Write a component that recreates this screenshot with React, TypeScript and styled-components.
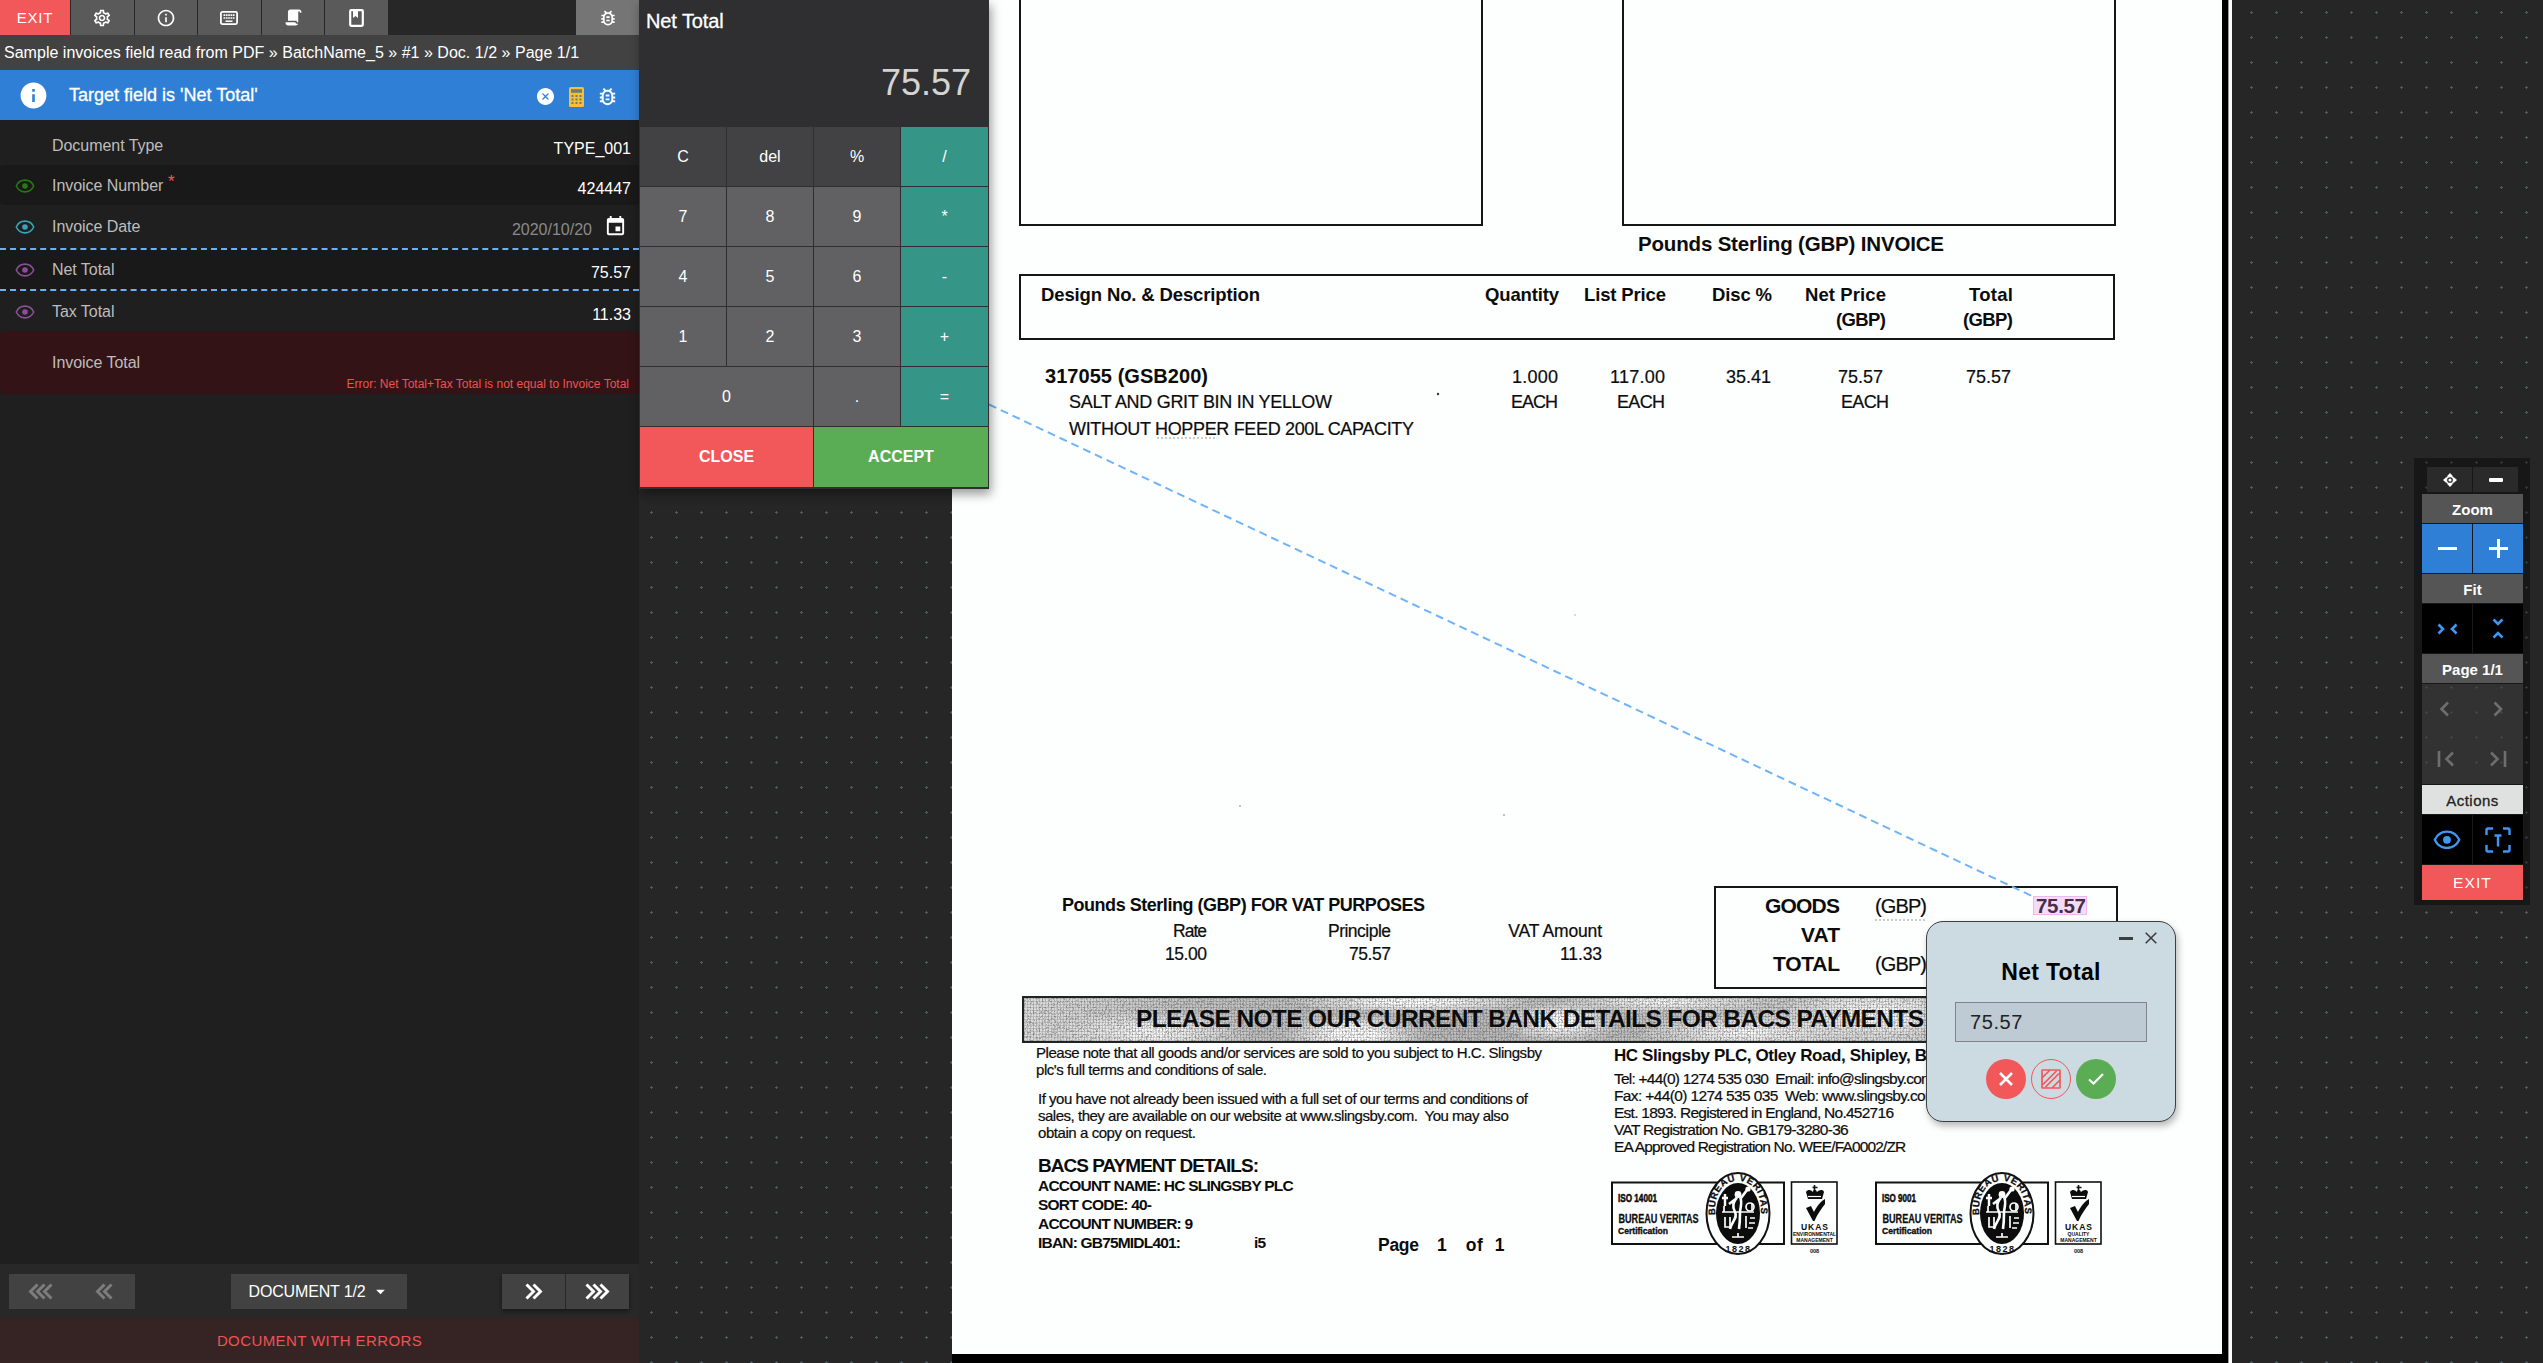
import React from "react";
import styled, { createGlobalStyle, css } from "styled-components";
import {
  MdOutlineSettings,
  MdInfoOutline,
  MdOutlineBugReport,
  MdInfo,
  MdEvent,
  MdArrowDropDown,
} from "react-icons/md";
import { IoIosCloseCircle } from "react-icons/io";

const SANS = '"Liberation Sans", Arial, Helvetica, sans-serif';

const GlobalStyle = createGlobalStyle`
  * { box-sizing: border-box; }
  body { margin: 0; background: #262626; font-family: ${SANS}; overflow: hidden; }
  svg { display: block; flex: none; }
`;

/* ---------- shell ---------- */

const Shell = styled.div`
  display: flex;
  width: 2543px;
  height: 1363px;
  overflow: hidden;
`;

const Sidebar = styled.aside`
  display: flex;
  flex-direction: column;
  width: 639px;
  flex: none;
  background: #1f1f1f;
  color: #fff;
`;

const Canvas = styled.main`
  position: relative;
  flex: 1;
  background: #262626;
`;

/* ---------- sidebar top ---------- */

const TopBar = styled.div`
  display: flex;
  gap: 1px;
  height: 35px;
  background: #272727;
`;

const TopButton = styled.button<{ $bg?: string; $w?: number; $end?: boolean }>`
  display: flex;
  align-items: center;
  justify-content: center;
  width: ${(p) => p.$w ?? 62.6}px;
  height: 35px;
  padding: 0;
  border: 0;
  margin-left: ${(p) => (p.$end ? "auto" : 0)};
  background: ${(p) => p.$bg ?? "#5a5a5a"};
  color: #fff;
  font: 15px ${SANS};
  letter-spacing: 0.8px;
`;

const Breadcrumb = styled.div`
  height: 35px;
  padding-left: 4px;
  background: #424242;
  font-size: 16px;
  line-height: 36px;
  letter-spacing: 0.02px;
  white-space: nowrap;
`;

const TargetBar = styled.div`
  display: flex;
  align-items: center;
  height: 50px;
  padding: 0 20px 0 18px;
  background: #307fd6;
`;

const TargetText = styled.span`
  flex: 1;
  margin-left: 20px;
  font-size: 18px;
  letter-spacing: 0;
  -webkit-text-stroke: 0.3px #fff;
`;

const TargetActions = styled.div`
  display: flex;
  align-items: center;
  gap: 12.5px;
  padding-top: 3px;
`;

/* ---------- fields ---------- */

const Field = styled.div<{ $h: number; $bg?: string; $active?: boolean; $pad?: number }>`
  display: flex;
  position: relative;
  height: ${(p) => p.$h}px;
  padding: ${(p) => p.$pad ?? 0}px 8px 0 15px;
  background: ${(p) => p.$bg ?? "transparent"};
  border-radius: 4px;
  ${(p) =>
    p.$active &&
    css`
      border-radius: 0;
      background: #191919;
      border-top: 2px dashed #6ab0ff;
      border-bottom: 2px dashed #6ab0ff;
    `}
`;

const EyeSlot = styled.div`
  width: 37px;
  padding-top: 3px;
`;

const Label = styled.div`
  flex: 1;
  font-size: 16px;
  line-height: 19px;
  letter-spacing: -0.05px;
  color: #bdbdbd;
`;

const Required = styled.sup`
  color: #f25a5c;
  font-size: 17px;
  line-height: 0;
  vertical-align: 4px;
`;

const Value = styled.div<{ $dim?: boolean }>`
  padding-top: 3px;
  font-size: 16px;
  line-height: 20px;
  color: ${(p) => (p.$dim ? "#8a8a8a" : "#fff")};
`;

const CalendarSlot = styled.div`
  margin: -2px 4px 0 12px;
`;

const FieldError = styled.div`
  align-self: flex-end;
  padding: 0 2px 3px 0;
  font-size: 12px;
  line-height: 14px;
  color: #ee5253;
`;

const Spacer = styled.div`
  flex: 1;
`;

/* ---------- sidebar bottom ---------- */

const NavBar = styled.div`
  display: flex;
  justify-content: space-between;
  align-items: center;
  height: 55px;
  padding: 0 10px 0 9px;
  background: #282828;
`;

const NavGroup = styled.div<{ $raised?: boolean }>`
  display: flex;
  gap: ${(p) => (p.$raised ? 1 : 0)}px;
  box-shadow: ${(p) => (p.$raised ? "0 2px 4px rgba(0,0,0,.45)" : "none")};
`;

const NavButton = styled.button<{ $dim?: boolean }>`
  display: flex;
  align-items: center;
  justify-content: center;
  width: 63px;
  height: 35px;
  padding: 0;
  border: 0;
  background: #424242;
  color: ${(p) => (p.$dim ? "#7d7d7d" : "#fff")};
`;

const DocumentPicker = styled.button`
  display: flex;
  align-items: center;
  width: 176px;
  height: 35px;
  padding: 0 0 0 18px;
  border: 0;
  background: #424242;
  color: #fff;
  font: 16px ${SANS};
  letter-spacing: -0.15px;
  gap: 4px;
`;

const ErrorFooter = styled.div`
  height: 44px;
  background: #362424;
  color: #ee5355;
  font-size: 15px;
  line-height: 44px;
  text-align: center;
  letter-spacing: 0.4px;
`;

/* ---------- calculator ---------- */

const Calculator = styled.section`
  position: absolute;
  left: 0;
  top: 0;
  width: 350px;
  height: 489px;
  padding: 0 1px 2px;
  background: #2f2f31;
  color: #fff;
  box-shadow: 2px 5px 10px rgba(0, 0, 0, 0.4);
`;

const CalcHead = styled.header`
  height: 127px;
  padding: 11px 17px 0 6px;
`;

const CalcTitle = styled.div`
  font-size: 20px;
  line-height: 20px;
  letter-spacing: -0.1px;
  -webkit-text-stroke: 0.3px #fff;
`;

const CalcDisplay = styled.div`
  margin-top: 32px;
  font-size: 36px;
  line-height: 40px;
  text-align: right;
  color: #d4d4d4;
`;

const CalcGrid = styled.div`
  display: grid;
  grid-template-columns: 86px 86px 86px 87px;
  grid-template-rows: repeat(5, 59px) 60px;
  gap: 1px;
`;

const keyColors = {
  fn: "#424244",
  num: "#616163",
  op: "#359688",
  close: "#f2575a",
  accept: "#5bad55",
};

const Key = styled.button<{ $kind: keyof typeof keyColors; $wide?: boolean }>`
  grid-column: span ${(p) => (p.$wide ? 2 : 1)};
  padding: 0;
  border: 0;
  background: ${(p) => keyColors[p.$kind]};
  color: #fff;
  font: ${(p) => (p.$kind === "close" || p.$kind === "accept" ? "bold " : "")}16px ${SANS};
`;

/* ---------- viewer toolbar ---------- */

const Tools = styled.section`
  position: absolute;
  left: 1775px;
  top: 458px;
  display: flex;
  flex-direction: column;
  gap: 1px;
  width: 116px;
  height: 447px;
  padding: 9px 7px 0 8px;
  background: rgba(0, 0, 0, 0.38);
  color: #fff;
`;

const ToolRow = styled.div<{ $inset?: boolean }>`
  display: flex;
  gap: 1px;
  padding: ${(p) => (p.$inset ? "0 5px 1px" : "0")};
`;

const Pager = styled.div`
  display: grid;
  grid-template-columns: 50% 50%;
  height: 100px;
  background: rgba(84, 84, 84, 0.45);
`;

const ToolHead = styled.div<{ $light?: boolean }>`
  height: 29px;
  background: ${(p) => (p.$light ? "#dfe1e0" : "#555")};
  color: ${(p) => (p.$light ? "#222" : "#fff")};
  font-size: 15px;
  font-weight: ${(p) => (p.$light ? 400 : 700)};
  letter-spacing: ${(p) => (p.$light ? 0.5 : 0)}px;
  line-height: 31px;
  text-align: center;
  -webkit-text-stroke: ${(p) => (p.$light ? 0.3 : 0)}px #222;
`;

const Tool = styled.button<{ $bg?: string; $h?: number; $dim?: boolean }>`
  display: flex;
  flex: 1;
  align-items: center;
  justify-content: center;
  height: ${(p) => p.$h ?? 49}px;
  padding: 0;
  border: 0;
  background: ${(p) => (p.$dim ? "transparent" : p.$bg ?? "#000")};
  color: ${(p) => (p.$dim ? "#6e6e6e" : "#3f97f5")};
`;

const ToolExit = styled.button`
  height: 35px;
  padding: 0;
  border: 0;
  background: #f2575a;
  color: #fff;
  font: 15.5px ${SANS};
  letter-spacing: 1.1px;
`;

/* ---------- field popup ---------- */

const Popup = styled.section`
  position: absolute;
  left: 1287px;
  top: 921px;
  display: flex;
  flex-direction: column;
  align-items: center;
  width: 250px;
  height: 201px;
  border: 1px solid #3b4043;
  border-radius: 17px;
  background: #ccdae1;
  box-shadow: 2px 4px 7px rgba(0, 0, 0, 0.28);
`;

const PopupBar = styled.div`
  display: flex;
  align-self: flex-end;
  align-items: center;
  gap: 12px;
  padding: 10px 18px 0 0;
  height: 22px;
`;

const PopupTitle = styled.h3`
  margin: 15px 0 0;
  font-size: 23px;
  line-height: 26px;
  letter-spacing: 0.3px;
  color: #000;
`;

const PopupInput = styled.div`
  width: 192px;
  height: 40px;
  margin-top: 17px;
  padding-left: 14px;
  border: 1px solid #7b858a;
  background: #bfcbd4;
  color: #222;
  font-size: 20px;
  line-height: 38px;
  letter-spacing: 0.6px;
`;

const PopupActions = styled.div`
  display: flex;
  gap: 5px;
  margin-top: 17px;
`;

const Round = styled.button<{ $bg?: string }>`
  display: flex;
  align-items: center;
  justify-content: center;
  width: 40px;
  height: 40px;
  padding: 0;
  border: ${(p) => (p.$bg ? "0" : "1px solid #f2575a")};
  border-radius: 50%;
  background: ${(p) => p.$bg ?? "transparent"};
  color: ${(p) => (p.$bg ? "#fff" : "#f2575a")};
`;

const Overlay = styled.svg`
  position: absolute;
  left: 0;
  top: 0;
  pointer-events: none;
`;

/* ---------- scanned page ---------- */

const Sheet = styled.article`
  position: absolute;
  left: 313px;
  top: 0;
  display: flex;
  width: 1280px;
  height: 1363px;
  background: #fdfefe;
  color: #0c0c0c;
`;

const SheetBody = styled.div`
  display: flex;
  flex-direction: column;
  width: 1270px;
  height: 1363px;
  border-bottom: 9px solid #000;
`;

const SheetEdge = styled.div`
  width: 7px;
  height: 1363px;
  background: #000;
  border-right: 1px solid #999;
`;

const Frames = styled.div`
  display: flex;
  gap: 139px;
  height: 226px;
  padding-left: 67px;
`;

const Frame = styled.div<{ $w: number }>`
  width: ${(p) => p.$w}px;
  border: 2px solid #161616;
  border-top: 0;
`;

const Heading = styled.div`
  padding: 8px 0 20px 686px;
`;

const ColumnsBox = styled.div`
  width: 1096px;
  height: 66px;
  margin-left: 67px;
  padding: 9px 0 0 20px;
  border: 2px solid #161616;
`;

const ItemColumns = styled.div<{ $h: number; $indent?: number }>`
  display: grid;
  grid-template-columns: 418px 100px 107px 106px 114px 127px;
  height: ${(p) => p.$h}px;
  justify-items: end;

  & > :first-child {
    justify-self: start;
    margin-left: ${(p) => p.$indent ?? 0}px;
  }
`;

const Items = styled.div`
  padding: 27px 0 0 89px;
  height: 546px;
`;

const Totals = styled.div`
  display: flex;
  height: 103px;
`;

const VatBlock = styled.div`
  width: 762px;
  padding: 9px 0 0 110px;
`;

const VatRow = styled.div<{ $h: number }>`
  display: grid;
  grid-template-columns: 145px 184px 211px;
  justify-items: end;
  height: ${(p) => p.$h}px;
`;

const TotalBox = styled.div`
  width: 404px;
  height: 103px;
  padding-top: 8px;
  border: 2px solid #161616;
`;

const TotalRow = styled.div`
  display: grid;
  grid-template-columns: 124px 87px 159px;
  justify-items: end;
  height: 29px;
`;

const Band = styled.div`
  display: flex;
  position: relative;
  flex: none;
  width: 1097px;
  height: 47px;
  margin: 7px 0 0 70px;
  padding: 11px 0 0 112px;
  border: 2px solid #222;
  background: repeating-linear-gradient(90deg, rgba(40, 40, 40, 0.16) 0 1px, transparent 1px 3px),
    repeating-linear-gradient(0deg, rgba(40, 40, 40, 0.14) 0 1px, transparent 1px 3px),
    radial-gradient(ellipse 70px 20px at 330px 36px, #fff 30%, transparent),
    radial-gradient(ellipse 100px 22px at 130px 34px, #fff, transparent),
    radial-gradient(ellipse 60px 22px at 535px 24px, #fff 20%, transparent),
    radial-gradient(ellipse 130px 12px at 390px 4px, #fff 20%, transparent),
    radial-gradient(ellipse 110px 12px at 640px 4px, #fff, transparent),
    radial-gradient(ellipse 110px 18px at 720px 34px, #fff, transparent),
    radial-gradient(ellipse 90px 26px at 850px 16px, #fff, transparent),
    linear-gradient(90deg, #ddd, #c4c4c4 15%, #bbb 45%, #c4c4c4 60%, #dadada 80%, #bbb);
`;

const Grain = styled.svg`
  position: absolute;
  inset: 0;
`;

const BandText = styled.div`
  position: relative;
`;

const Fine = styled.div`
  display: flex;
  flex: 1;
`;

const FineColumn = styled.div<{ $w: number; $left: number; $top: number }>`
  width: ${(p) => p.$w}px;
  padding: ${(p) => p.$top}px 0 0 ${(p) => p.$left}px;
`;

const Block = styled.div<{ $top: number; $left?: number }>`
  padding: ${(p) => p.$top}px 0 0 ${(p) => p.$left ?? 0}px;
`;

const IbanRow = styled.div`
  display: flex;
  align-items: flex-start;
`;

const PageNo = styled.div`
  display: flex;
  padding: 3px 0 0 112px;
`;

const Logos = styled.div`
  display: flex;
  gap: 34px;
  margin: 17px 0 0 -3px;
`;

const InkText = styled.span<{ $size: number; $bold?: boolean; $lh: number; $mr?: number }>`
  display: block;
  margin-right: ${(p) => p.$mr ?? 0}px;
  font-size: ${(p) => p.$size}px;
  font-weight: ${(p) => (p.$bold ? 700 : 400)};
  line-height: ${(p) => p.$lh}px;
  white-space: pre;
  -webkit-text-stroke: ${(p) => (p.$bold ? 0 : 0.2)}px #0c0c0c;
`;

const ctx = document.createElement("canvas").getContext("2d")!;

/* Spreads a recognised text over the width its box has on the scan. */
function Ink(props: {
  children: string;
  w: number;
  size?: number;
  bold?: boolean;
  lh?: number;
  mr?: number;
}) {
  const { children, w, size = 18, bold, lh = 20, mr = 0 } = props;
  ctx.font = `${bold ? "bold " : ""}${size}px ${SANS}`;
  const gap = (w - ctx.measureText(children).width) / Math.max(1, children.length - 1);
  return (
    <InkText $size={size} $bold={bold} $lh={lh} $mr={mr - gap} style={{ letterSpacing: gap }}>
      {children}
    </InkText>
  );
}

/* ---------- icons ---------- */

const Eye = ({ color, size = 20, weight = 1.9 }: { color: string; size?: number; weight?: number }) => (
  <svg width={size} height={size * 0.7} viewBox="0 0 24 17" fill="none">
    <path
      d="M1.4 8.5C3.4 4.2 7.4 1.4 12 1.4s8.600 2.800 10.600 7.100c-2 4.300-6 7.100-10.600 7.100S3.400 12.800 1.400 8.500z"
      stroke={color}
      strokeWidth={weight}
    />
    <circle cx="12" cy="8.500" r="3.400" fill={color} />
  </svg>
);

const Script = () => (
  <svg width="19" height="19" viewBox="0 0 24 24" fill="#fff">
    <path d="M17.8 20c-.4 1.200-1.500 2-2.800 2H5c-1.700 0-3-1.300-3-3v-1h12.200c.4 1.200 1.500 2 2.800 2h.8M19 2c1.700 0 3 1.300 3 3v1h-2V5c0-.6-.4-1-1-1s-1 .4-1 1v13h-1c-.6 0-1-.4-1-1v-1H5V5c0-1.700 1.300-3 3-3h11z" />
  </svg>
);

const Keyboard = () => (
  <svg width="18" height="14" viewBox="0 0 18 14">
    <rect x=".9" y=".9" width="16.200" height="12.200" rx="1.500" fill="none" stroke="#fff" strokeWidth="1.800" />
    <path d="M3.500 4.200h11M3.500 7h11" stroke="#fff" strokeWidth="1.700" strokeDasharray="1.700 .65" />
    <path d="M5.500 10.200h7" stroke="#fff" strokeWidth="1.500" />
  </svg>
);

const Book = () => (
  <svg width="15" height="18" viewBox="0 0 15 18">
    <rect x="1.200" y="1.200" width="12.600" height="15.600" rx="1" fill="none" stroke="#fff" strokeWidth="2.200" />
    <path d="M4 1.500h5v7.500L6.500 7 4 9z" fill="#fff" />
  </svg>
);

const YellowCalc = () => (
  <svg width="15" height="20" viewBox="0 0 15 20">
    <rect width="15" height="20" rx="1.600" fill="#f5bf3a" />
    <rect x="2" y="2.200" width="11" height="3.600" fill="#6d7f6c" />
    {[8, 11.500, 15].map((y) =>
      [2.500, 6.500, 10.500].map((x) => (
        <rect key={`${x}-${y}`} x={x} y={y} width="2" height="2" fill="#6d7f6c" />
      ))
    )}
  </svg>
);

const Chevrons = ({ n, left }: { n: number; left?: boolean }) => {
  const w = 11 + (n - 1) * 7;
  return (
    <svg width={w} height="17" viewBox={`0 0 ${w} 17`} fill="none" stroke="currentColor" strokeWidth="2.900">
      <g transform={left ? `translate(${w} 0) scale(-1 1)` : undefined}>
        {Array.from({ length: n }, (_, i) => (
          <path key={i} d={`M${1.5 + i * 7} 1.500l7 7-7 7`} />
        ))}
      </g>
    </svg>
  );
};

const Stroke = ({ d, w = 24, h = 24, sw = 3 }: { d: string; w?: number; h?: number; sw?: number }) => (
  <svg width={w} height={h} viewBox={`0 0 ${w} ${h}`} fill="none" stroke="currentColor" strokeWidth={sw}>
    <path d={d} />
  </svg>
);

const MoveIcon = () => (
  <svg width="14" height="14" viewBox="0 0 14 14" fill="#fff">
    <path d="M7 0l3.300 3.600H3.700zM7 14l3.300-3.600H3.700zM0 7l3.600-3.300v6.600zM14 7l-3.600-3.300v6.600z" />
    <circle cx="7" cy="7" r="3.600" fill="none" stroke="#fff" strokeWidth="1.500" />
    <circle cx="7" cy="7" r="1.600" />
  </svg>
);

const CertLogo = ({ iso, scope }: { iso: string; scope: string }) => {
  const id = `ring${iso.replace(/\D/g, "")}`;
  return (
    <svg width="230" height="84" viewBox="0 0 230 84" fontFamily={SANS} fontWeight="700" fill="#0c0c0c">
      <rect x="1" y="10.500" width="172" height="61.500" fill="none" stroke="#111" strokeWidth="2" />
      <text x="7" y="29.500" fontSize="10" textLength={iso.length > 8 ? 39 : 34} lengthAdjust="spacingAndGlyphs" stroke="#111" strokeWidth=".5">{iso}</text>
      <text x="7.500" y="50.500" fontSize="12.500" textLength="80" lengthAdjust="spacingAndGlyphs" stroke="#111" strokeWidth=".3">BUREAU VERITAS</text>
      <text x="7" y="62" fontSize="9.500" textLength="50" lengthAdjust="spacingAndGlyphs" stroke="#111" strokeWidth=".4">Certification</text>
      <ellipse cx="127" cy="41.500" rx="31.500" ry="40.500" fill="#fdfefe" stroke="#111" strokeWidth="2" />
      <ellipse cx="127" cy="41.500" rx="22" ry="30.500" />
      <path id={id} d="M104.500 44C102 22 112 9 127 9S152 22 149.500 44" fill="none" />
      <text fontSize="9.500" stroke="#111" strokeWidth=".3">
        <textPath href={`#${id}`} textLength="92" startOffset="1">BUREAU VERITAS</textPath>
      </text>
      <text x="127.500" y="80" fontSize="9" textAnchor="middle" letterSpacing="1.500">1828</text>
      <g stroke="#fdfefe" fill="none" strokeWidth="1.700">
        <path d="M111 40h32M113 40v-6M141 31v8M114 45v10h5V45M135 44v12M139 46h5M138 51h6M137 56h5M121 65h12M127 61v4" />
        <path d="M126 25c-4 6-5 9-2 15s-3 9-5 17M129 25c3 6 0 10 0 16s0 9-1 16M126 26l-8 6M130 26l6-8" strokeWidth="2.600" />
        <circle cx="139" cy="35" r="4" />
        <path d="M114 22v12M111 26h6" strokeWidth="2.400" />
      </g>
      <circle cx="127" cy="22.500" r="3.400" fill="#fdfefe" />
      <circle cx="137" cy="17" r="2.600" fill="#fdfefe" />
      <rect x="180.500" y="10" width="45.500" height="62" fill="none" stroke="#111" strokeWidth="1.600" />
      <path d="M197 27l-2-7c2-3 5-2 7 0 0-3 3-3 4 0 2-2 6-3 7 0l-2 7z" />
      <path d="M203.500 13v6M201.500 15.500h5" stroke="#111" strokeWidth="1.600" />
      <path d="M197 24.500h13" stroke="#fdfefe" strokeWidth="1.200" />
      <path d="M195 36l5-2 3 6c3-6 7-11 11-13v5c-4 5-8 11-10.500 17h-1.500z" />
      <text x="204" y="58" fontSize="8.500" textAnchor="middle" letterSpacing="1">UKAS</text>
      <text x="203.500" y="64" fontSize="5" textAnchor="middle">{scope}</text>
      <text x="203.500" y="69.500" fontSize="5" textAnchor="middle">MANAGEMENT</text>
      <text x="203.500" y="80.500" fontSize="5.500" textAnchor="middle">008</text>
    </svg>
  );
};

/* ---------- parts ---------- */

const FieldRow = (props: {
  label: string;
  value?: string;
  h: number;
  pad: number;
  eye?: string;
  bg?: string;
  active?: boolean;
  required?: boolean;
  date?: boolean;
  error?: string;
}) => (
  <Field $h={props.h} $pad={props.pad} $bg={props.bg} $active={props.active}>
    <EyeSlot>{props.eye && <Eye color={props.eye} />}</EyeSlot>
    <Label>
      {props.label}
      {props.required && <Required> *</Required>}
    </Label>
    {props.value && <Value $dim={props.date}>{props.value}</Value>}
    {props.date && (
      <CalendarSlot>
        <MdEvent size={23} />
      </CalendarSlot>
    )}
    {props.error && <FieldError>{props.error}</FieldError>}
  </Field>
);

const Invoice = () => (
  <Sheet>
    <SheetBody>
      <Frames>
        <Frame $w={464} />
        <Frame $w={494} />
      </Frames>
      <Heading>
        <Ink bold size={20.5} w={306}>Pounds Sterling (GBP) INVOICE</Ink>
      </Heading>
      <ColumnsBox>
        <ItemColumns $h={25}>
          <Ink bold size={18.5} w={219}>Design No. &amp; Description</Ink>
          <Ink bold size={18.5} w={74}>Quantity</Ink>
          <Ink bold size={18.5} w={82}>List Price</Ink>
          <Ink bold size={18.5} w={60}>Disc %</Ink>
          <Ink bold size={18.5} w={81}>Net Price</Ink>
          <Ink bold size={18.5} w={44}>Total</Ink>
        </ItemColumns>
        <ItemColumns $h={25}>
          <span /><span /><span /><span />
          <Ink bold size={18.5} w={50}>(GBP)</Ink>
          <Ink bold size={18.5} w={50}>(GBP)</Ink>
        </ItemColumns>
      </ColumnsBox>
      <Items>
        <ItemColumns $h={25} $indent={4}>
          <Ink bold size={20} lh={19} w={163}>317055 (GSB200)</Ink>
          <Ink w={46} mr={1}>1.000</Ink>
          <Ink w={55} mr={1}>117.00</Ink>
          <Ink w={45} mr={1}>35.41</Ink>
          <Ink w={45} mr={3}>75.57</Ink>
          <Ink w={45} mr={2}>75.57</Ink>
        </ItemColumns>
        <ItemColumns $h={27} $indent={28}>
          <Ink w={265}>SALT AND GRIT BIN IN YELLOW</Ink>
          <Ink w={47} mr={1}>EACH</Ink>
          <Ink w={48} mr={1}>EACH</Ink>
          <span />
          <Ink w={48} mr={-3}>EACH</Ink>
        </ItemColumns>
        <ItemColumns $h={27} $indent={28}>
          <Ink w={346}>WITHOUT HOPPER FEED 200L CAPACITY</Ink>
        </ItemColumns>
      </Items>
      <Totals>
        <VatBlock>
          <Ink bold size={18} w={363}>Pounds Sterling (GBP) FOR VAT PURPOSES</Ink>
          <Block $top={6}>
            <VatRow $h={23}>
              <Ink size={17.5} w={34}>Rate</Ink>
              <Ink size={17.5} w={63}>Principle</Ink>
              <Ink size={17.5} w={95}>VAT Amount</Ink>
            </VatRow>
            <VatRow $h={23}>
              <Ink size={17.5} w={42}>15.00</Ink>
              <Ink size={17.5} w={42}>75.57</Ink>
              <Ink size={17.5} w={42}>11.33</Ink>
            </VatRow>
          </Block>
        </VatBlock>
        <TotalBox>
          <TotalRow>
            <Ink bold size={21} w={75}>GOODS</Ink>
            <Ink size={20} w={52}>(GBP)</Ink>
            <Ink bold size={20.5} w={50}>75.57</Ink>
          </TotalRow>
          <TotalRow>
            <Ink bold size={21} w={39}>VAT</Ink>
          </TotalRow>
          <TotalRow>
            <Ink bold size={21} w={67}>TOTAL</Ink>
            <Ink size={20} w={52}>(GBP)</Ink>
          </TotalRow>
        </TotalBox>
      </Totals>
      <Band>
        <Grain width="1093" height="43">
          <filter id="grain" x="0" y="0" width="100%" height="100%">
            <feTurbulence type="fractalNoise" baseFrequency=".55" numOctaves="2" seed="7" />
            <feColorMatrix values="0 0 0 0 .1  0 0 0 0 .1  0 0 0 0 .1  7 0 0 0 -3.700" />
          </filter>
          <rect width="1093" height="43" filter="url(#grain)" opacity=".45" />
        </Grain>
        <BandText>
          <Ink bold size={24.5} w={788}>PLEASE NOTE OUR CURRENT BANK DETAILS FOR BACS PAYMENTS</Ink>
        </BandText>
      </Band>
      <Fine>
        <FineColumn $w={662} $left={84} $top={1}>
          <Ink size={15} lh={17} w={506}>Please note that all goods and/or services are sold to you subject to H.C. Slingsby</Ink>
          <Ink size={15} lh={17} w={231}>plc's full terms and conditions of sale.</Ink>
          <Block $top={12} $left={2}>
            <Ink size={15} lh={17} w={490}>If you have not already been issued with a full set of our terms and conditions of</Ink>
            <Ink size={15} lh={17} w={471}>sales, they are available on our website at www.slingsby.com.  You may also</Ink>
            <Ink size={15} lh={17} w={158}>obtain a copy on request.</Ink>
          </Block>
          <Block $top={14} $left={2}>
            <Ink bold size={19} lh={21} w={221}>BACS PAYMENT DETAILS:</Ink>
            <Ink bold size={15.5} lh={19} w={256}>ACCOUNT NAME: HC SLINGSBY PLC</Ink>
            <Ink bold size={15.5} lh={19} w={114}>SORT CODE: 40-</Ink>
            <Ink bold size={15.5} lh={19} w={155}>ACCOUNT NUMBER: 9</Ink>
            <IbanRow>
              <Ink bold size={15.5} lh={19} w={143} mr={73}>IBAN: GB75MIDL401:</Ink>
              <Ink bold size={15.5} lh={19} w={12}>i5</Ink>
              <PageNo>
                <Ink bold size={17.5} lh={19} w={41} mr={18}>Page</Ink>
                <Ink bold size={17.5} lh={19} w={9} mr={19}>1</Ink>
                <Ink bold size={17.5} lh={19} w={17} mr={12}>of</Ink>
                <Ink bold size={17.5} lh={19} w={9}>1</Ink>
              </PageNo>
            </IbanRow>
          </Block>
        </FineColumn>
        <FineColumn $w={608} $left={0} $top={3}>
          <Ink bold size={17} lh={20} w={313}>HC Slingsby PLC, Otley Road, Shipley, B</Ink>
          <Block $top={4}>
            <Ink size={15.5} lh={17} w={320}>Tel: +44(0) 1274 535 030  Email: info@slingsby.com</Ink>
            <Ink size={15.5} lh={17} w={324}>Fax: +44(0) 1274 535 035  Web: www.slingsby.com</Ink>
            <Ink size={15.5} lh={17} w={280}>Est. 1893. Registered in England, No.452716</Ink>
            <Ink size={15.5} lh={17} w={235}>VAT Registration No. GB179-3280-36</Ink>
            <Ink size={15.5} lh={17} w={294}>EA Approved Registration No. WEE/FA0002/ZR</Ink>
          </Block>
          <Logos>
            <CertLogo iso="ISO 14001" scope="ENVIRONMENTAL" />
            <CertLogo iso="ISO 9001" scope="QUALITY" />
          </Logos>
        </FineColumn>
      </Fine>
    </SheetBody>
    <SheetEdge />
  </Sheet>
);

const keys: [string, keyof typeof keyColors, boolean?][] = [
  ["C", "fn"], ["del", "fn"], ["%", "fn"], ["/", "op"],
  ["7", "num"], ["8", "num"], ["9", "num"], ["*", "op"],
  ["4", "num"], ["5", "num"], ["6", "num"], ["-", "op"],
  ["1", "num"], ["2", "num"], ["3", "num"], ["+", "op"],
  ["0", "num", true], [".", "num"], ["=", "op"],
  ["CLOSE", "close", true], ["ACCEPT", "accept", true],
];

export default function App() {
  return (
    <Shell>
      <GlobalStyle />
      <Sidebar>
        <TopBar>
          <TopButton $bg="#f2575a" $w={70}>EXIT</TopButton>
          <TopButton><MdOutlineSettings size={20} /></TopButton>
          <TopButton><MdInfoOutline size={20} /></TopButton>
          <TopButton><Keyboard /></TopButton>
          <TopButton><Script /></TopButton>
          <TopButton><Book /></TopButton>
          <TopButton $bg="#757575" $end><MdOutlineBugReport size={20} /></TopButton>
        </TopBar>
        <Breadcrumb>Sample invoices field read from PDF » BatchName_5 » #1 » Doc. 1/2 » Page 1/1</Breadcrumb>
        <TargetBar>
          <MdInfo size={31} />
          <TargetText>Target field is 'Net Total'</TargetText>
          <TargetActions>
            <IoIosCloseCircle size={21} />
            <YellowCalc />
            <MdOutlineBugReport size={23} />
          </TargetActions>
        </TargetBar>
        <FieldRow label="Document Type" value="TYPE_001" h={45} pad={16} />
        <FieldRow label="Invoice Number" value="424447" h={40} pad={11} bg="#191919" eye="#257a10" required />
        <FieldRow label="Invoice Date" value="2020/10/20" h={43} pad={12} eye="#3ba3b8" date />
        <FieldRow label="Net Total" value="75.57" h={43} pad={10} eye="#8a4f96" active />
        <FieldRow label="Tax Total" value="11.33" h={40} pad={11} eye="#8a4f96" />
        <FieldRow
          label="Invoice Total"
          h={63}
          pad={22}
          bg="#341316"
          error="Error: Net Total+Tax Total is not equal to Invoice Total"
        />
        <Spacer />
        <NavBar>
          <NavGroup>
            <NavButton $dim><Chevrons n={3} left /></NavButton>
            <NavButton $dim><Chevrons n={2} left /></NavButton>
          </NavGroup>
          <DocumentPicker>DOCUMENT 1/2 <MdArrowDropDown size={21} /></DocumentPicker>
          <NavGroup $raised>
            <NavButton><Chevrons n={2} /></NavButton>
            <NavButton><Chevrons n={3} /></NavButton>
          </NavGroup>
        </NavBar>
        <ErrorFooter>DOCUMENT WITH ERRORS</ErrorFooter>
      </Sidebar>

      <Canvas>
        <Overlay width="1904" height="1363">
          <defs>
            <pattern id="plus" width="25" height="25" patternUnits="userSpaceOnUse">
              <path d="M11 12h3v1h-3zM12 11h1v3h-1z" fill="#4c5a62" />
            </pattern>
          </defs>
          <rect width="1904" height="1363" fill="url(#plus)" />
        </Overlay>
        <Invoice />
        <Overlay width="1904" height="1363">
          <rect x="1394.500" y="896.500" width="53" height="18" fill="rgba(222,130,226,.28)" stroke="#f0b8f2" />
          <path d="M350 404.500L1393 896" stroke="#6fb3fb" strokeWidth="2" strokeDasharray="8 5" />
          <path d="M518 438h60M1236 920h51" stroke="#999" strokeDasharray="2 2" />
          <circle cx="799" cy="394" r="1.200" fill="#333" />
          <circle cx="601" cy="806" r=".8" fill="#777" />
          <circle cx="865" cy="815" r=".8" fill="#777" />
          <circle cx="936" cy="615" r=".7" fill="#999" />
        </Overlay>

        <Calculator>
          <CalcHead>
            <CalcTitle>Net Total</CalcTitle>
            <CalcDisplay>75.57</CalcDisplay>
          </CalcHead>
          <CalcGrid>
            {keys.map(([k, kind, wide]) => (
              <Key key={k} $kind={kind} $wide={wide}>{k}</Key>
            ))}
          </CalcGrid>
        </Calculator>

        <Tools>
          <ToolRow $inset>
            <Tool $h={25} $bg="#2a2a2a"><MoveIcon /></Tool>
            <Tool $h={25} $bg="#2a2a2a">
              <svg width="14" height="4"><rect width="14" height="4" rx="1" fill="#fff" /></svg>
            </Tool>
          </ToolRow>
          <ToolHead>Zoom</ToolHead>
          <ToolRow>
            <Tool $bg="#307fd6">
              <svg width="19" height="19"><path d="M0 9.500h19" stroke="#fff" strokeWidth="3" /></svg>
            </Tool>
            <Tool $bg="#307fd6">
              <svg width="19" height="19"><path d="M0 9.500h19M9.500 0v19" stroke="#fff" strokeWidth="3" /></svg>
            </Tool>
          </ToolRow>
          <ToolHead>Fit</ToolHead>
          <ToolRow>
            <Tool><Stroke w={21} h={12} sw={2.6} d="M1.500 1.500L6 6l-4.500 4.500M19.500 1.500L15 6l4.500 4.500" /></Tool>
            <Tool><Stroke w={12} h={21} sw={2.6} d="M1.500 1.500L6 6l4.500-4.500M1.500 19.500L6 15l4.500 4.500" /></Tool>
          </ToolRow>
          <ToolHead>Page 1/1</ToolHead>
          <Pager>
            <Tool $dim><Stroke w={16} h={16} sw={2.6} d="M9 1.500L2.500 8 9 14.500" /></Tool>
            <Tool $dim><Stroke w={12} h={16} sw={2.6} d="M2.500 1.500L9 8l-6.500 6.500" /></Tool>
            <Tool $dim><Stroke w={20} h={16} sw={2.6} d="M2 0v16M16 1.500L9.500 8l6.500 6.500" /></Tool>
            <Tool $dim><Stroke w={18} h={16} sw={2.6} d="M16 0v16M2 1.500L8.500 8 2 14.500" /></Tool>
          </Pager>
          <ToolHead $light>Actions</ToolHead>
          <ToolRow>
            <Tool><Eye color="#3f97f5" size={28} weight={2} /></Tool>
            <Tool>
              <Stroke
                w={26}
                h={26}
                sw={2.4}
                d="M1.500 8V3q0-1.500 1.500-1.500h5M18 1.500h5q1.500 0 1.500 1.500v5M24.500 18v5q0 1.500-1.500 1.500h-5M8 24.500H3q-1.500 0-1.500-1.500v-5M9.500 8.500h7M13 8.500v11"
              />
            </Tool>
          </ToolRow>
          <ToolExit>EXIT</ToolExit>
        </Tools>

        <Popup>
          <PopupBar>
            <svg width="14" height="3"><rect width="14" height="3" fill="#3a3f42" /></svg>
            <svg width="12" height="12" stroke="#3a3f42" strokeWidth="1.600"><path d="M.7.700l10.600 10.600M11.300.700L.7 11.300" /></svg>
          </PopupBar>
          <PopupTitle>Net Total</PopupTitle>
          <PopupInput>75.57</PopupInput>
          <PopupActions>
            <Round $bg="#f2575a"><Stroke w={14} h={14} sw={2.6} d="M1 1l12 12M13 1L1 13" /></Round>
            <Round>
              <Stroke w={20} h={20} sw={1.7} d="M1.500 1h17q.5 0 .5.500v17q0 .5-.5.500h-17q-.5 0-.5-.5v-17q0-.5.500-.5zM1.500 8.500l7-7M2 15.500L15.500 2M4.500 18L18 4.500M11.500 18.500l7-7" />
            </Round>
            <Round $bg="#5bad55"><Stroke w={16} h={12} sw={2.2} d="M1 6.500l4.500 4L15 1" /></Round>
          </PopupActions>
        </Popup>
      </Canvas>
    </Shell>
  );
}
